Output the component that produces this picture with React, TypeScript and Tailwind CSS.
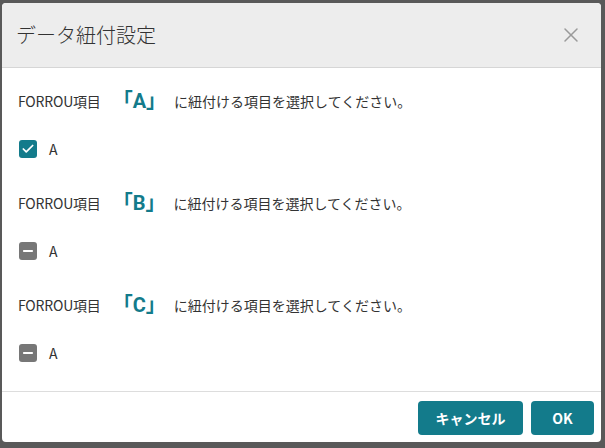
import { Check, Minus, X } from 'lucide-react';

type Mapping = {
  key: string;
  state: 'checked' | 'mixed';
};

const mappings: Mapping[] = [
  { key: 'A', state: 'checked' },
  { key: 'B', state: 'mixed' },
  { key: 'C', state: 'mixed' },
];

function CheckBox({ state }: { state: Mapping['state'] }) {
  if (state === 'checked') {
    return (
      <span className="flex h-[18px] w-[18px] items-center justify-center rounded-[3px] bg-[#137b8b] text-white">
        <Check className="h-[14px] w-[14px]" strokeWidth={3} />
      </span>
    );
  }
  return (
    <span className="flex h-[18px] w-[18px] items-center justify-center rounded-[3px] bg-[#777777] text-white">
      <Minus className="h-[14px] w-[14px]" strokeWidth={3.5} />
    </span>
  );
}

export default function App() {
  return (
    <div
      className="h-[448px] w-[605px] overflow-hidden bg-[#595959] pl-[2px] pt-[3px]"
      style={{ fontFamily: '"Noto Sans CJK JP", "Noto Sans", sans-serif' }}
    >
      <div className="flex h-[439px] w-[599px] flex-col overflow-hidden rounded-[4px] bg-white">
        <div className="flex h-[65px] shrink-0 items-center justify-between border-b border-[#d6d6d6] bg-[#ededed] pl-[14px] pr-[18px]">
          <h1 className="text-[20px] font-light leading-none text-[#333333]">データ紐付設定</h1>
          <X className="h-[24px] w-[24px] text-[#9a9a9a]" strokeWidth={1.5} />
        </div>

        <div className="flex flex-1 flex-col gap-[14px] pl-4 pt-[13px]">
          {mappings.map((m) => (
            <div key={m.key} className="flex flex-col gap-[8px]">
              <div className="flex h-10 items-center text-[14px] text-[#333333]">
                <span className="tracking-[-0.2px]">FORROU項目</span>
                <span
                  className="ml-[12px] mr-[8px] text-[20px] font-bold text-[#137b8b]"
                  style={{ fontFamily: 'Roboto, "Noto Sans CJK JP", sans-serif' }}
                >
                  「{m.key}」
                </span>
                <span>に紐付ける項目を選択してください。</span>
              </div>
              <div className="flex h-10 items-center gap-3 pl-px text-[14px] text-[#333333]">
                <CheckBox state={m.state} />
                <span>A</span>
              </div>
            </div>
          ))}
        </div>

        <div className="flex h-[51px] shrink-0 items-start justify-end gap-2 border-t border-[#dddddd] pr-[7px] pt-[9px]">
          <button className="h-[34px] w-[105px] rounded-[4px] bg-[#137b8b] text-[14px] font-bold text-white">
            キャンセル
          </button>
          <button className="h-[34px] w-[63px] rounded-[4px] bg-[#137b8b] text-[14px] font-bold text-white">
            OK
          </button>
        </div>
      </div>
    </div>
  );
}
